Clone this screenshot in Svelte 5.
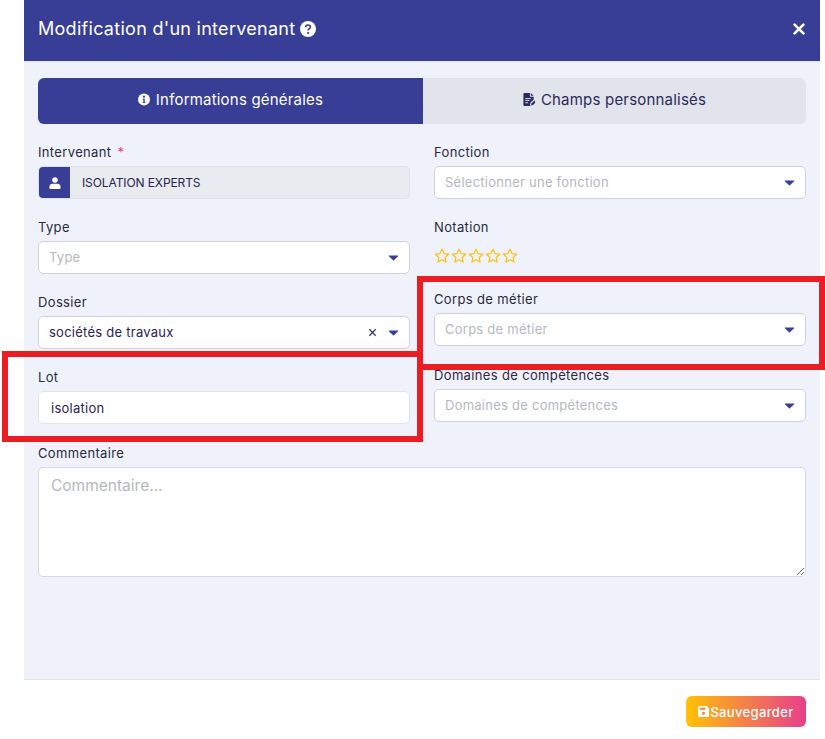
<script>
	const stars = [1, 2, 3, 4, 5];
</script>

{#snippet caret()}
	<svg class="caret" viewBox="0 0 12 7"><path d="M1 .6h10c.5 0 .8.6.4 1L6.5 6.2c-.3.3-.7.3-1 0L.6 1.6c-.4-.4-.1-1 .4-1z" /></svg>
{/snippet}

{#snippet select(label, placeholder)}
	<div class="field">
		<span class="label">{label}</span>
		<div class="control">
			<span class="placeholder">{placeholder}</span>
			{@render caret()}
		</div>
	</div>
{/snippet}

<div class="modal">
	<header>
		<h1>Modification d'un intervenant</h1>
		<svg class="help" viewBox="0 0 16 16">
			<circle cx="8" cy="8" r="8" fill="#fff" />
			<path d="M5.6 6.1c.1-1.4 1.1-2.1 2.4-2.1 1.4 0 2.4.8 2.4 2 0 1-.6 1.4-1.2 1.8-.6.4-1.1.7-1.1 1.4v.2" fill="none" stroke="#383e95" stroke-width="1.7" />
			<circle cx="8.1" cy="12" r="1.1" fill="#383e95" />
		</svg>
		<svg class="close" viewBox="0 0 12 12"><path d="M1.6 1.6l8.8 8.8M10.4 1.6l-8.8 8.8" stroke="#fff" stroke-width="2.6" stroke-linecap="round" /></svg>
	</header>

	<main>
		<div class="tabs">
			<div class="tab active">
				<svg viewBox="0 0 12 12">
					<circle cx="6" cy="6" r="6" fill="#fff" />
					<circle cx="6" cy="3.2" r="1.1" fill="#383e95" />
					<path d="M4.8 5.1h1.9v3.3h.7v1H4.7v-1h.7V6.1h-.6z" fill="#383e95" />
				</svg>
				Informations générales
			</div>
			<div class="tab">
				<svg viewBox="0 0 12 14">
					<path d="M1 0h6v3.5c0 .3.2.5.5.5H11v3L7.5 10.4 7 13l.6 1H1c-.6 0-1-.4-1-1V1c0-.6.4-1 1-1zM8 0l3 3H8z" fill="#2b2a5c" />
					<path d="M2 6h6M2 8h4.5M2 10.500h3" stroke="#e1e4ea" stroke-width="1" />
					<path d="M8.200 13.400l.4-2.200 3.300-3.200 1.700 1.700-3.300 3.300z" fill="#2b2a5c" />
				</svg>
				Champs personnalisés
			</div>
		</div>

		<div class="columns">
			<div class="column">
				<div class="field">
					<span class="label">Intervenant <em>*</em></span>
					<div class="readonly">
						<span class="prepend">
							<svg viewBox="0 0 12 13"><circle cx="6" cy="3.200" r="3" fill="#fff" /><path d="M0 12v-1.400C0 8.800 1.500 7.400 3.300 7.400h5.400c1.800 0 3.300 1.400 3.300 3.200V12c0 .6-.4 1-1 1H1c-.6 0-1-.4-1-1z" fill="#fff" /></svg>
						</span>
						<span class="readonly-text">ISOLATION EXPERTS</span>
					</div>
				</div>
				{@render select('Type', 'Type')}
				<div class="field">
					<span class="label">Dossier</span>
					<div class="control">
						<span class="value">sociétés de travaux</span>
						<svg class="clear" viewBox="0 0 10 10"><path d="M1.500 1.500l7 7M8.500 1.500l-7 7" stroke="#383e95" stroke-width="1.500" /></svg>
						{@render caret()}
					</div>
				</div>
				<div class="field">
					<span class="label">Lot</span>
					<input class="lot" value="isolation" />
				</div>
			</div>

			<div class="column">
				{@render select('Fonction', 'Sélectionner une fonction')}
				<div class="field notation">
					<span class="label">Notation</span>
					<div class="stars">
						{#each stars as star (star)}
							<svg viewBox="0 0 16 16"><path d="M8 1.300l2 4.300 4.700.6-3.500 3.200.9 4.700L8 11.800l-4.100 2.300.9-4.700L1.300 6.200 6 5.600z" fill="none" stroke="#ffc107" stroke-width="1.200" stroke-linejoin="round" /></svg>
						{/each}
					</div>
				</div>
				{@render select('Corps de métier', 'Corps de métier')}
				{@render select('Domaines de compétences', 'Domaines de compétences')}
			</div>
		</div>

		<div class="comment">
			<span class="label">Commentaire</span>
			<textarea placeholder="Commentaire..."></textarea>
		</div>
	</main>

	<footer>
		<button>
			<svg viewBox="0 0 12 12">
				<path d="M1.300 0h7.900L12 2.800v7.900c0 .7-.6 1.300-1.300 1.300H1.300C.6 12 0 11.400 0 10.700V1.300C0 .6.600 0 1.300 0z" fill="#fff" />
				<rect x="2" y="1.800" width="6" height="2.400" fill="#f58a42" />
				<circle cx="6" cy="8" r="1.700" fill="#f58a42" />
			</svg>
			Sauvegarder
		</button>
	</footer>

	<div class="mark mark-lot"></div>
	<div class="mark mark-corps"></div>
</div>

<style>
	:global(body) {
		background: #fff;
	}
	.modal {
		position: relative;
		width: 796px;
		height: 739px;
		margin-left: 24px;
		font-family: Inter, 'Noto Sans', sans-serif;
		color: #2a2a3c;
	}
	header {
		display: flex;
		align-items: center;
		height: 62px;
		padding: 0 15px 4px 14px;
		box-sizing: border-box;
		background: #383e95;
		border-bottom: 1px solid #dfe3ec;
	}
	h1 {
		margin: 0;
		font-size: 18px;
		font-weight: 400;
		letter-spacing: 0.28px;
		color: #fff;
	}
	.help {
		width: 16px;
		height: 16px;
		margin-left: 5px;
	}
	.close {
		width: 12px;
		height: 12px;
		margin-left: auto;
	}
	main {
		height: 618px;
		padding: 16px 14px 0;
		box-sizing: border-box;
		background: #eff2fa;
		border-bottom: 1px solid #dfe2ea;
	}
	.tabs {
		display: flex;
		height: 46px;
		border-radius: 6px;
		overflow: hidden;
		background: #e1e4ea;
	}
	.tab {
		flex: 1;
		display: flex;
		align-items: center;
		justify-content: center;
		gap: 6px;
		padding-bottom: 3px;
		box-sizing: border-box;
		font-size: 15px;
		letter-spacing: 0.2px;
		color: #2b2a5c;
	}
	.tab svg {
		width: 12px;
		height: 13px;
	}
	.tab.active {
		flex: 0 0 385px;
		background: #383e95;
		color: #fff;
	}
	.columns {
		display: flex;
		gap: 24px;
		margin-top: 20px;
	}
	.column {
		flex: 1;
		display: flex;
		flex-direction: column;
	}
	.field {
		height: 75px;
	}
	.column:last-child .field:nth-child(3) {
		height: 76px;
	}
	.notation {
		height: 72px;
	}
	.label {
		display: block;
		height: 22px;
		box-sizing: border-box;
		font-size: 13px;
		line-height: 16px;
		letter-spacing: 0.35px;
	}
	.label em {
		font-style: normal;
		color: #e83e8c;
		margin-left: 2px;
	}
	.control,
	.lot {
		display: flex;
		align-items: center;
		width: 100%;
		height: 33px;
		padding: 0 10px;
		box-sizing: border-box;
		background: #fff;
		border: 1px solid #cfd3de;
		border-radius: 5px;
		font-family: inherit;
		font-size: 13px;
		letter-spacing: 0.25px;
	}
	.placeholder {
		flex: 1;
		padding-bottom: 1px;
		color: #b5b8c1;
	}
	.value {
		flex: 1;
		padding-bottom: 1px;
		color: #2b2350;
	}
	.caret {
		width: 11px;
		height: 6px;
		fill: #383e95;
	}
	.clear {
		width: 9px;
		height: 9px;
		margin-right: 11px;
	}
	.readonly {
		display: flex;
		height: 33px;
		background: #e8ebef;
		border: 1px solid #dfe2ea;
		border-radius: 5px;
		overflow: hidden;
		box-sizing: border-box;
	}
	.prepend {
		display: flex;
		align-items: center;
		justify-content: center;
		width: 31px;
		background: #383e95;
	}
	.prepend svg {
		width: 12px;
		height: 12px;
	}
	.readonly-text {
		align-self: center;
		margin-left: 12px;
		padding-bottom: 1px;
		font-size: 12px;
		letter-spacing: -0.1px;
		color: #2b2350;
	}
	.lot {
		padding: 0 12px;
		border-color: #e0e4ec;
		color: #2b2350;
		outline: none;
	}
	.stars {
		display: flex;
		gap: 1px;
		margin-top: 7px;
	}
	.stars svg {
		width: 16px;
		height: 16px;
	}
	.comment {
		margin-top: 1px;
	}
	textarea {
		display: block;
		width: 100%;
		height: 110px;
		padding: 8px 12px;
		box-sizing: border-box;
		border: 1px solid #d5d9e3;
		border-radius: 5px;
		background: #fff;
		font-family: inherit;
		font-size: 15.5px;
		outline: none;
	}
	textarea::placeholder {
		color: #b5b8c1;
	}
	footer {
		display: flex;
		justify-content: flex-end;
		padding: 16px 14px 0;
	}
	button {
		display: flex;
		align-items: center;
		justify-content: center;
		gap: 1px;
		width: 120px;
		height: 31px;
		padding: 0;
		border: 0;
		border-radius: 6px;
		background: linear-gradient(90deg, #ffc107, #e83e8c);
		color: #fff;
		font-family: inherit;
		font-size: 13px;
		font-weight: 500;
		letter-spacing: 0.35px;
	}
	button svg {
		width: 11px;
		height: 11px;
	}
	.mark {
		position: absolute;
		box-sizing: border-box;
		border: 6px solid #ec1c24;
		pointer-events: none;
	}
	.mark-lot {
		left: -22px;
		top: 351px;
		width: 421px;
		height: 91px;
	}
	.mark-corps {
		left: 393px;
		top: 276px;
		width: 408px;
		height: 94px;
	}
</style>
